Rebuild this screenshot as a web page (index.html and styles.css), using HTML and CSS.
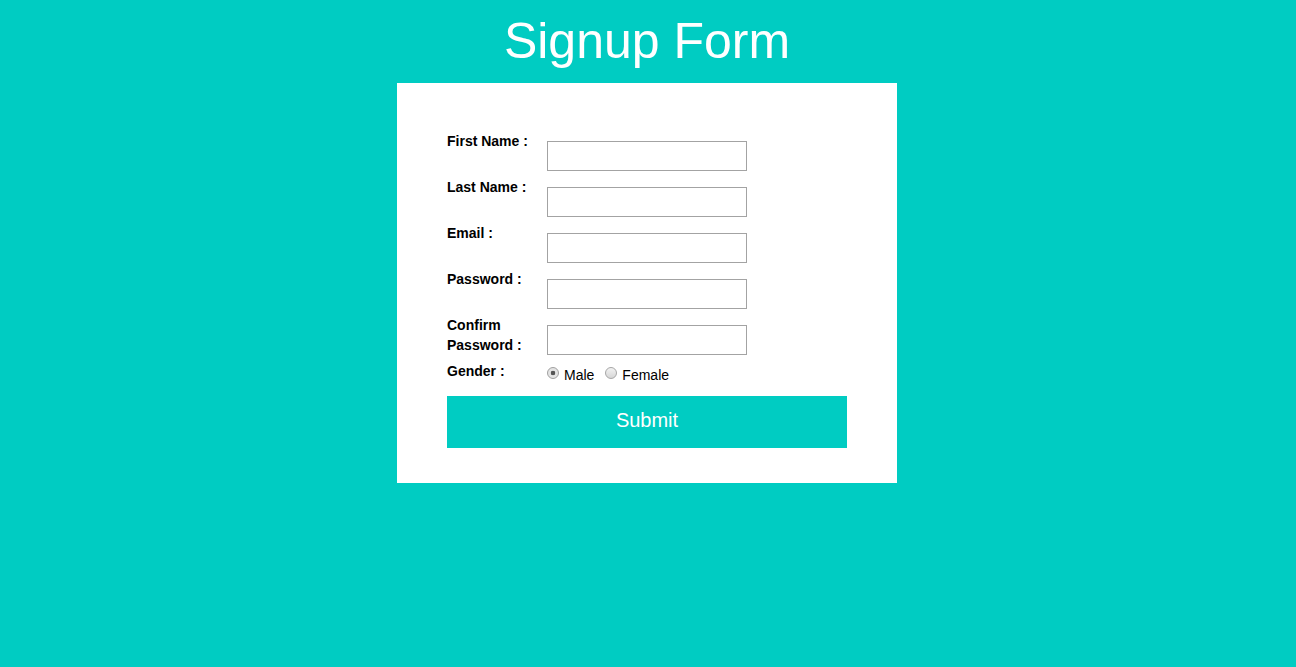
FILE: index.html
```html
<!DOCTYPE html>
<html>
<head>
<meta charset="utf-8">
<title>Signup Form</title>
<link rel="stylesheet" href="styles.css">
</head>
<body>
<h1 class="title">Signup Form</h1>
<form class="card">
  <div class="grid">
    <label class="lbl" for="fn">First Name :</label>
    <input class="field" id="fn" type="text">
    <label class="lbl" for="ln">Last Name :</label>
    <input class="field" id="ln" type="text">
    <label class="lbl" for="em">Email :</label>
    <input class="field" id="em" type="email">
    <label class="lbl" for="pw">Password :</label>
    <input class="field" id="pw" type="password">
    <label class="lbl" for="cpw">Confirm Password :</label>
    <input class="field" id="cpw" type="password">
    <span class="lbl">Gender :</span>
    <div class="radios">
      <label class="opt"><input class="radio" type="radio" name="g" checked><span>Male</span></label><label class="opt opt-2"><input class="radio" type="radio" name="g"><span>Female</span></label>
    </div>
  </div>
  <button class="submit" type="button">Submit</button>
</form>
</body>
</html>
```
FILE: styles.css
```css
html, body {
  margin: 0;
  padding: 0;
}
body {
  background: #00ccc2;
  font-family: "Liberation Sans", Arial, sans-serif;
  padding-right: 2px;
  min-height: 667px;
  box-sizing: border-box;
}
.title {
  margin: 12px 0 13px;
  font-size: 50px;
  line-height: 58px;
  font-weight: normal;
  color: #fff;
  text-align: center;
}
.card {
  width: 500px;
  box-sizing: border-box;
  margin: 0 auto;
  background: #fff;
  padding: 48px 50px 35px;
}
.grid {
  display: grid;
  grid-template-columns: 100px 1fr;
  row-gap: 6px;
  align-items: start;
}
.lbl {
  font-size: 14px;
  font-weight: bold;
  line-height: 20px;
  color: #000;
}
.field {
  margin: 10px 0 0;
  width: 200px;
  height: 30px;
  box-sizing: border-box;
  border: 1px solid #a3a3a3;
  padding: 0 4px;
  background: #fff;
  font-family: inherit;
}
.radios {
  padding-top: 4px;
  font-size: 14px;
  line-height: 20px;
  color: #000;
}
.opt {
  display: inline;
}
.opt-2 .radio {
  margin-left: 11px;
}
.radio {
  appearance: none;
  -webkit-appearance: none;
  display: inline-block;
  width: 12px;
  height: 12px;
  box-sizing: border-box;
  margin: 0 5px 1px 0;
  border: 1px solid #a6a6a6;
  border-radius: 50%;
  background: linear-gradient(#f2f2f2, #d6d6d6);
  vertical-align: baseline;
}
.radio:checked {
  background: radial-gradient(circle, #555 0, #555 2px, #e4e4e4 2.6px, #e4e4e4 100%);
  border-color: #a0a0a0;
}
.submit {
  display: block;
  width: 400px;
  height: 52px;
  margin: 11px 0 0;
  padding: 13px 0 16px;
  border: 0;
  background: #00ccc2;
  color: #fff;
  font-family: inherit;
  font-size: 20px;
  line-height: 23px;
  text-align: center;
}
```
